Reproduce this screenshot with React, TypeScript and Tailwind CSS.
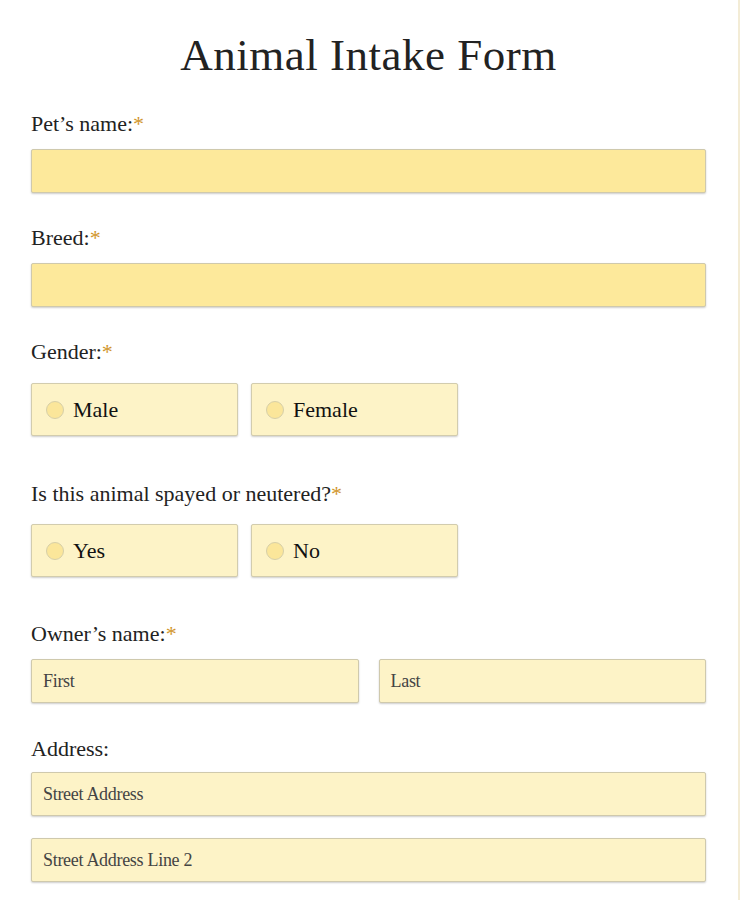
import React from "react";

const serif = { fontFamily: '"Liberation Serif", "DejaVu Serif", serif' };

function Label({ text, required = true }: { text: string; required?: boolean }) {
  return (
    <div className="text-[22px] leading-[24px] text-[#222]" style={serif}>
      {text}
      {required && <span className="text-[#d1952b]">*</span>}
    </div>
  );
}

function Radio({ label }: { label: string }) {
  return (
    <label className="flex items-center gap-[9px] w-[207px] h-[53px] pl-[14px] bg-[#fdf3c7] border border-[#d2ccae] rounded-[2px] shadow-[0_1px_2px_rgba(0,0,0,0.2)]">
      <span className="w-[18px] h-[18px] rounded-full bg-[#fbe69a] border border-[#d6cfa8]" />
      <span className="text-[22px] text-[#111]" style={serif}>
        {label}
      </span>
    </label>
  );
}

function TextBox({ placeholder = "", strong = false, className = "" }: { placeholder?: string; strong?: boolean; className?: string }) {
  return (
    <div
      className={`h-[44px] flex items-center px-[11px] border border-[#cfc9ad] rounded-[2px] shadow-[0_1px_2px_rgba(0,0,0,0.2)] ${
        strong ? "bg-[#fde99b]" : "bg-[#fdf3c7]"
      } ${className}`}
    >
      <span className="text-[18px] text-[#444] tracking-[-0.3px]" style={serif}>
        {placeholder}
      </span>
    </div>
  );
}

export default function App() {
  return (
    <div className="w-[740px] h-[900px] bg-white overflow-hidden flex">
      <div className="w-[738px] pl-[31px] pr-[32px] pt-[28px]">
        <h1 className="text-center text-[45px] leading-[54px] text-[#222] tracking-[0.5px] mb-[30px]" style={serif}>
          Animal Intake Form
        </h1>

        <Label text="Pet’s name:" />
        <TextBox strong className="mt-[13px]" />

        <div className="mt-[33px]">
          <Label text="Breed:" />
        </div>
        <TextBox strong className="mt-[13px]" />

        <div className="mt-[33px]">
          <Label text="Gender:" />
        </div>
        <div className="flex gap-[13px] mt-[19px]">
          <Radio label="Male" />
          <Radio label="Female" />
        </div>

        <div className="mt-[46px]">
          <Label text="Is this animal spayed or neutered?" />
        </div>
        <div className="flex gap-[13px] mt-[18px]">
          <Radio label="Yes" />
          <Radio label="No" />
        </div>

        <div className="mt-[45px]">
          <Label text="Owner’s name:" />
        </div>
        <div className="flex gap-[20px] mt-[13px]">
          <TextBox placeholder="First" className="flex-1" />
          <TextBox placeholder="Last" className="flex-1" />
        </div>

        <div className="mt-[34px]">
          <Label text="Address:" required={false} />
        </div>
        <TextBox placeholder="Street Address" className="mt-[11px]" />
        <TextBox placeholder="Street Address Line 2" className="mt-[22px]" />
      </div>
      <div className="w-[2px] h-full bg-[#f3ecd6]" />
    </div>
  );
}
